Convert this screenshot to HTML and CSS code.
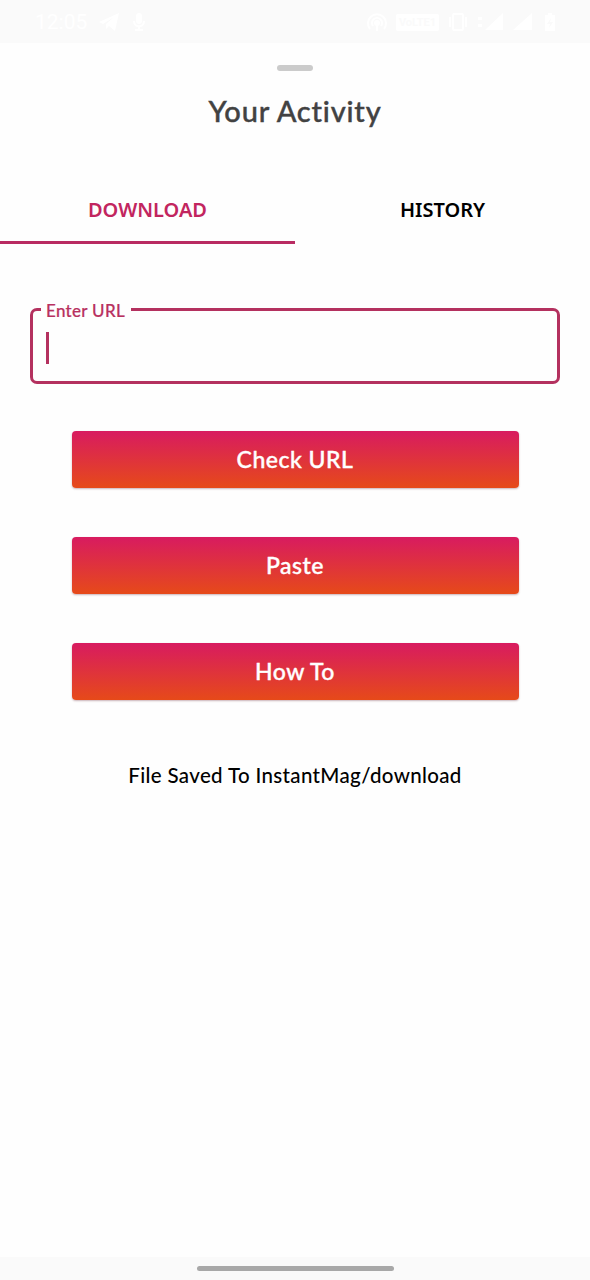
FILE: index.html
```
<!DOCTYPE html>
<html lang="en">
<head>
<meta charset="utf-8">
<title>Your Activity</title>
<link rel="stylesheet" href="styles.css">
</head>
<body>
<div class="screen">
  <header class="status">
    <div class="status-left">
      <span class="clock">12:05</span>
      <svg width="22" height="20" viewBox="0 0 22 20"><path d="M1 10 21 1 17 19 11 14 8 17 8 12 16 5 5 12Z" fill="currentColor"/></svg>
      <svg class="mic" width="14" height="20" viewBox="0 0 14 20"><rect x="4" y="1" width="6" height="11" rx="3" fill="currentColor"/><path d="M2 9c0 7 10 7 10 0M7 14v4M3 18h8" fill="none" stroke="currentColor" stroke-width="2"/></svg>
    </div>
    <div class="status-right">
      <svg width="22" height="20" viewBox="0 0 22 20" fill="none" stroke="currentColor" stroke-width="2"><path d="M4 17a9 9 0 1 1 14 0M7 14a5 5 0 1 1 8 0"/><circle cx="11" cy="11" r="2" fill="currentColor"/><path d="M11 12v7"/></svg>
      <span class="volte">VoLTE1</span>
      <svg width="22" height="20" viewBox="0 0 22 20" fill="none" stroke="currentColor" stroke-width="2"><rect x="6" y="2" width="10" height="16" rx="1"/><path d="M3 5v10M19 5v10"/></svg>
      <svg width="28" height="20" viewBox="0 0 28 20" fill="currentColor"><path d="M8 18 26 1v17ZM1 5h4v3H1ZM1 12h4v3H1Z"/></svg>
      <svg width="20" height="20" viewBox="0 0 20 20" fill="currentColor"><path d="M0 18 19 1v17Z"/></svg>
      <svg class="battery" width="12" height="20" viewBox="0 0 12 20"><path d="M1 3h3V1h4v2h3v16H1Z" fill="currentColor"/><path d="M7 6 3 12h3l-1 4 4-6H6Z" fill="#fafafa"/></svg>
    </div>
  </header>
  <main class="sheet">
    <div class="handle"></div>
    <h1 class="title">Your Activity</h1>
    <nav class="tabs">
      <a class="tab tab-active">DOWNLOAD</a>
      <a class="tab">HISTORY</a>
    </nav>
    <fieldset class="field">
      <legend class="field-label">Enter URL</legend>
      <div class="caret"></div>
    </fieldset>
    <div class="actions">
      <button class="action">Check URL</button>
      <button class="action">Paste</button>
      <button class="action">How To</button>
    </div>
    <p class="note">File Saved To InstantMag/download</p>
  </main>
  <footer class="navbar"><div class="home"></div></footer>
</div>
</body>
</html>
```
FILE: styles.css
```
* { box-sizing: border-box; }
body { margin: 0; background: #fefefe; font-family: "Lato", sans-serif; font-weight: 500; }
.screen { width: 590px; height: 1280px; display: flex; flex-direction: column; }
.status { height: 43px; flex: none; padding: 1px 34px 0 35px; background: #fafafa; color: #fff; display: flex; align-items: center; justify-content: space-between; }
.status-left, .status-right { display: flex; align-items: center; }
.clock { font: 400 21px/24px Roboto, sans-serif; width: 52px; margin-right: 11px; }
.mic { margin-left: 12px; }
.status-right { gap: 8px; }
.volte { width: 43px; height: 17px; border-radius: 2px; background: #fff; color: #fafafa; font: 700 11px/17px Roboto, sans-serif; text-align: center; }
.battery { margin-left: 3px; }
.sheet { flex: 1; display: flex; flex-direction: column; }
.handle { width: 36px; height: 6px; margin: 22px auto 0; border-radius: 3px; background: #cbcbcb; }
.title { margin: 20px 0 0; height: 41px; color: #424242; font-size: 29px; line-height: 40px; font-weight: 500; letter-spacing: .8px; text-align: center; -webkit-text-stroke: .4px; }
.tabs { display: flex; margin-top: 45px; height: 67px; }
.tab { flex: 1; padding-top: 17px; color: #000; font: 600 20px/32px "Noto Sans", sans-serif; text-align: center; }
.tab-active { color: #c2255f; border-bottom: 3px solid #b92b62; }
.field { margin: 57px 30px 0; height: 83px; min-width: 0; padding: 0 14px; border: 3px solid #b4315f; border-radius: 7px; }
.field-label { margin-left: -6px; padding: 0 6px 0 5px; color: #b8305f; font-size: 17px; line-height: 20px; height: 16px; letter-spacing: .3px; white-space: nowrap; -webkit-text-stroke: .2px; }
.caret { width: 3px; height: 32px; margin: 15px 0 0 -1px; background: #b4315f; }
.actions { display: flex; flex-direction: column; gap: 49px; padding: 0 71.5px; margin-top: 47px; }
.action { height: 57px; border: 0; border-radius: 4px; padding: 0; background: linear-gradient(#d81b60, #e64a19); color: #fff; font: 500 23px/57px "Lato", sans-serif; letter-spacing: .5px; -webkit-text-stroke: .4px; box-shadow: 0 1px 2px rgba(80, 0, 20, .3); }
.note { margin: 60px 0 0; color: #000; font-size: 20.5px; line-height: 30px; letter-spacing: .35px; text-align: center; }
.navbar { height: 23px; background: #fafafa; display: flex; justify-content: center; padding-top: 9px; }
.home { width: 197px; height: 5px; border-radius: 3px; background: #a8a8a8; }
```
